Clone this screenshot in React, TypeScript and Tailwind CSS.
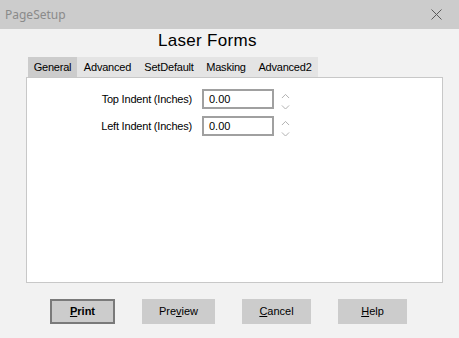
import React from "react";

const F = { fontFamily: '"Liberation Sans", Arial, sans-serif' };

function Spinner() {
  return (
    <div className="ml-[4px] flex h-[20px] w-[14px] flex-col items-center gap-[6px] self-start pt-[5px]">
      <svg width="9" height="5" viewBox="0 0 9 5" className="block">
        <path d="M0.5 4.5 L4.5 0.5 L8.5 4.5" fill="none" stroke="#a8a8a8" strokeWidth="1" />
      </svg>
      <svg width="9" height="5" viewBox="0 0 9 5" className="block">
        <path d="M0.5 0.5 L4.5 4.5 L8.5 0.5" fill="none" stroke="#a8a8a8" strokeWidth="1" />
      </svg>
    </div>
  );
}

function Field({ label }: { label: string }) {
  return (
    <div className="flex h-[20px] items-center">
      <div className="w-[165px] text-right text-[11px] tracking-[-0.2px] text-black">{label}</div>
      <div className="ml-[10px] flex h-[20px] w-[72px] items-center border-2 border-[#a0a0a0] bg-white pl-[5px] text-[11px] text-black">
        0.00
      </div>
      <Spinner />
    </div>
  );
}

const tabs: { name: string; w: string; active?: boolean }[] = [
  { name: "General", w: "w-[49px]", active: true },
  { name: "Advanced", w: "w-[61px]" },
  { name: "SetDefault", w: "w-[62px]" },
  { name: "Masking", w: "w-[52px]" },
  { name: "Advanced2", w: "w-[66px]" },
];

export default function App() {
  return (
    <div className="flex h-[338px] w-[459px] flex-col overflow-hidden bg-[#f2f2f2]" style={F}>
      <div className="flex h-[29px] items-center justify-between bg-[#cccccc] pl-[5px] pr-[17px]">
        <span className="text-[12px] text-[#8a8a8a]" style={{ fontFamily: '"Noto Sans", "Open Sans", sans-serif' }}>
          PageSetup
        </span>
        <svg width="11" height="11" viewBox="0 0 11 11">
          <path d="M0.5 0.5 L10.5 10.5 M10.5 0.5 L0.5 10.5" stroke="#5a5a5a" strokeWidth="1" />
        </svg>
      </div>
      <div className="h-[28px] pl-[158px] text-[17px] leading-[23px] tracking-[0.3px] text-black">Laser Forms</div>
      <div className="flex h-[20px] pl-[28px]">
        {tabs.map((t) => (
          <div
            key={t.name}
            className={`${t.w} ${t.active ? "bg-[#cccccc]" : "bg-[#e4e4e4]"} h-[20px] text-center text-[11px] leading-[20px] tracking-[-0.2px] text-black`}
          >
            {t.name}
          </div>
        ))}
      </div>
      <div className="ml-[26px] flex h-[206px] w-[417px] flex-col gap-[7px] border border-[#c8c8c8] bg-white pt-[11px]">
        <Field label="Top Indent (Inches)" />
        <Field label="Left Indent (Inches)" />
      </div>
      <div className="mt-[16px] flex gap-[27px] pl-[50px]">
        <button className="flex h-[25px] w-[65px] items-center justify-center border-2 border-[#7a7a7a] bg-[#cccccc] text-[11px] font-bold text-black">
          <span><u>P</u>rint</span>
        </button>
        <button className="flex h-[25px] w-[73px] items-center justify-center bg-[#cccccc] text-[11px] text-black">
          <span>Pre<u>v</u>iew</span>
        </button>
        <button className="flex h-[25px] w-[69px] items-center justify-center bg-[#cccccc] text-[11px] text-black">
          <span><u>C</u>ancel</span>
        </button>
        <button className="flex h-[25px] w-[69px] items-center justify-center bg-[#cccccc] text-[11px] text-black">
          <span><u>H</u>elp</span>
        </button>
      </div>
    </div>
  );
}
